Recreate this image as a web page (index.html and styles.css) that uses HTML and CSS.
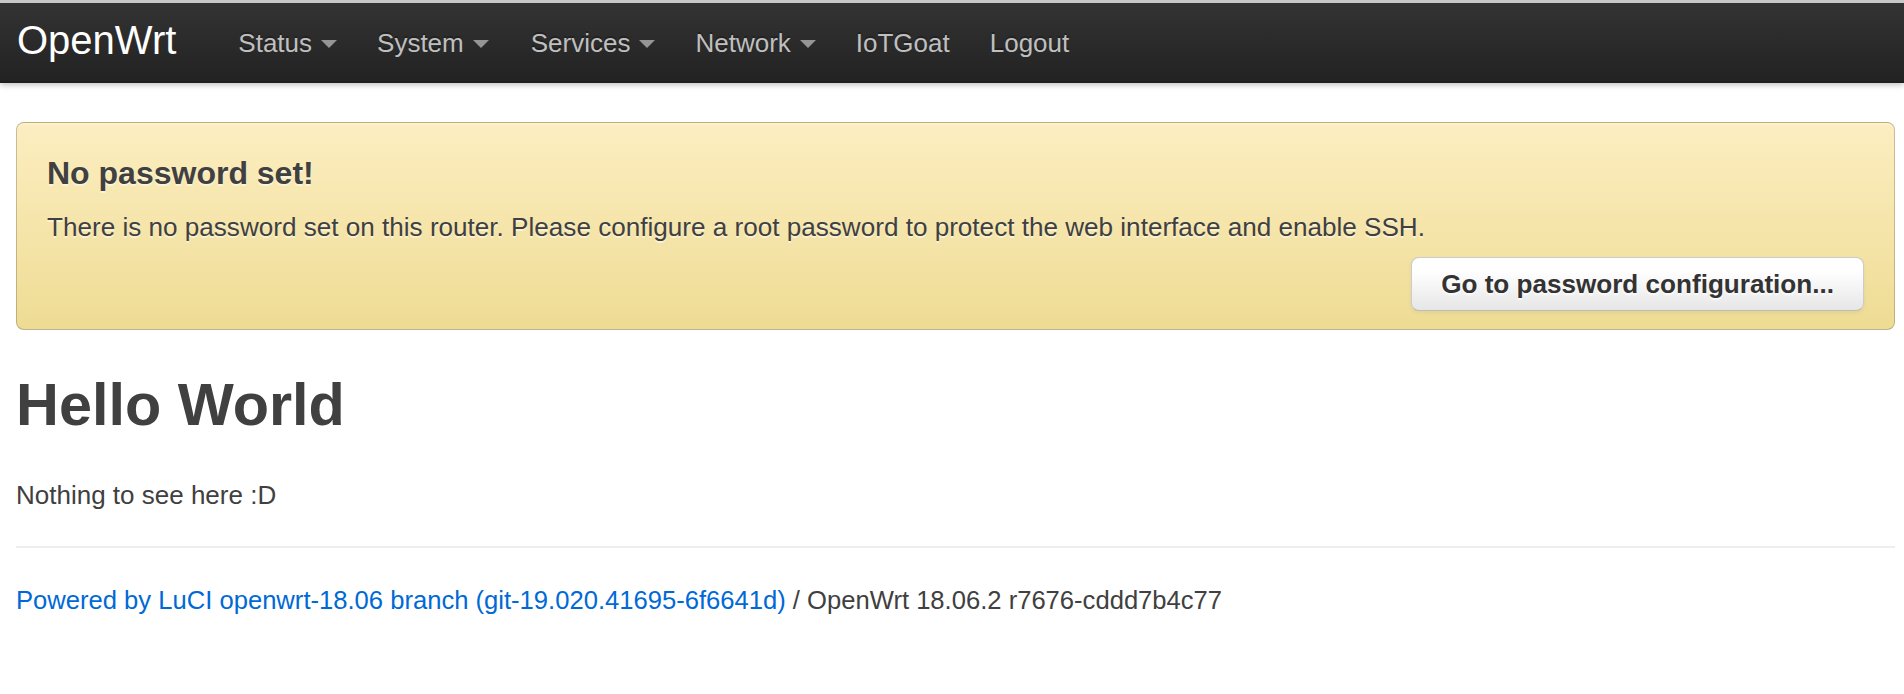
FILE: index.html
```html
<!DOCTYPE html>
<html lang="en">
<head>
<meta charset="utf-8">
<title>OpenWrt - LuCI</title>
<link rel="stylesheet" href="styles.css">
</head>
<body>
<header class="topbar">
  <div class="topbar-inner">
    <a class="brand" href="#">OpenWrt</a>
    <ul class="nav">
      <li><a class="dropdown-toggle" href="#">Status</a></li>
      <li><a class="dropdown-toggle" href="#">System</a></li>
      <li><a class="dropdown-toggle" href="#">Services</a></li>
      <li><a class="dropdown-toggle" href="#">Network</a></li>
      <li><a href="#">IoTGoat</a></li>
      <li><a href="#">Logout</a></li>
    </ul>
  </div>
</header>
<div class="container">
  <div class="alert-message warning">
    <h4>No password set!</h4>
    <p>There is no password set on this router. Please configure a root password to protect the web interface and enable SSH.</p>
    <div class="actions"><button class="btn" type="button">Go to password configuration...</button></div>
  </div>
  <h2 class="page-title">Hello World</h2>
  <p class="content">Nothing to see here :D</p>
  <footer class="footer">
    <hr class="rule">
    <p class="powered"><a href="#">Powered by LuCI openwrt-18.06 branch (git-19.020.41695-6f6641d)</a> / OpenWrt 18.06.2 r7676-cddd7b4c77</p>
  </footer>
</div>
</body>
</html>
```
FILE: styles.css
```css
html, body {
  margin: 0;
  padding: 0;
  background: #ffffff;
}
body {
  font-family: "Liberation Sans", Arial, Helvetica, sans-serif;
  font-size: 26px;
  line-height: 36px;
  color: #404040;
}
a {
  text-decoration: none;
}

/* top bar */
.topbar {
  border-top: 3px solid #c8c8c8;
  height: 80px;
  background-color: #222222;
  background-image: linear-gradient(to bottom, #333333, #222222);
  box-shadow: 0 2px 6px rgba(0, 0, 0, 0.25), inset 0 -2px 0 rgba(0, 0, 0, 0.1);
}
.topbar-inner {
  display: flex;
  align-items: flex-start;
  padding-left: 17px;
}
.brand {
  display: block;
  padding: 17px 0 23px;
  margin-right: 42px;
  color: #ffffff;
  font-size: 40px;
  line-height: 40px;
  font-weight: normal;
}
.nav {
  display: flex;
  margin: 0;
  padding: 0;
  list-style: none;
}
.nav a {
  display: block;
  padding: 21px 20px 21px;
  line-height: 38px;
  color: #bfbfbf;
  font-size: 26px;
  text-shadow: 0 -2px 0 rgba(0, 0, 0, 0.25);
}
.nav li:nth-child(2) a { padding-right: 21px; }
.nav li:nth-child(3) a { padding-left: 21px; }
.dropdown-toggle::after {
  content: "";
  display: inline-block;
  vertical-align: top;
  width: 0;
  height: 0;
  margin-top: 16px;
  margin-left: 9px;
  border-left: 8px solid transparent;
  border-right: 8px solid transparent;
  border-top: 8px solid #ffffff;
  opacity: 0.5;
}

/* content */
.container {
  padding: 0 9px 0 16px;
}
.alert-message {
  margin-top: 39px;
  padding: 32px 30px 18px;
  border: 1px solid rgba(0, 0, 0, 0.2);
  border-bottom-color: rgba(0, 0, 0, 0.25);
  border-radius: 8px;
  background-color: #eedc94;
  background-image: linear-gradient(to bottom, #fceec1, #eedc94);
  box-shadow: inset 0 2px 0 rgba(255, 255, 255, 0.25);
  text-shadow: 0 2px 0 rgba(255, 255, 255, 0.5);
}
.alert-message h4 {
  margin: 0 0 18px;
  font-size: 32px;
  line-height: 36px;
  font-weight: bold;
  color: #404040;
}
.alert-message p {
  margin: 0;
  font-size: 26.1px;
}
.actions {
  display: flex;
  justify-content: flex-end;
  margin-top: 12px;
}
.btn {
  font-family: "Liberation Sans", Arial, Helvetica, sans-serif;
  font-size: 26.1px;
  line-height: 36px;
  font-weight: bold;
  color: #333333;
  padding: 8px 29px;
  border: 1px solid #cccccc;
  border-bottom-color: #bbbbbb;
  border-radius: 8px;
  background-color: #e6e6e6;
  background-image: linear-gradient(to bottom, #ffffff, #ffffff 25%, #e6e6e6);
  box-shadow: inset 0 2px 0 rgba(255, 255, 255, 0.2), 0 2px 4px rgba(0, 0, 0, 0.05);
  text-shadow: 0 2px 2px rgba(255, 255, 255, 0.75);
  cursor: pointer;
}
.page-title {
  margin: 39px 0 0;
  font-size: 59.4px;
  line-height: 72px;
  font-weight: bold;
  color: #404040;
}
.content {
  margin: 36px 0 0;
}
.rule {
  margin: 33px 0 34px;
  height: 0;
  border: 0;
  border-top: 2px solid #eeeeee;
}
.powered {
  margin: 0;
  font-size: 25.6px;
}
.powered a {
  color: #0069d6;
}
```
